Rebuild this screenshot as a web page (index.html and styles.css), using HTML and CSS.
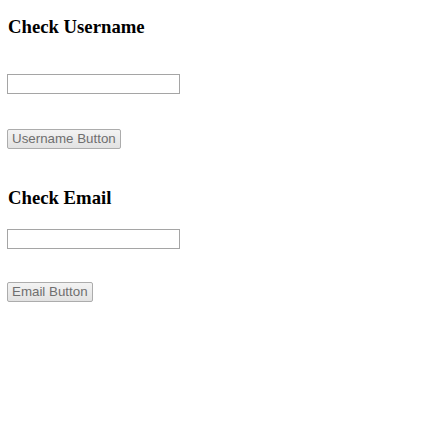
FILE: index.html
```html
<!DOCTYPE html>
<html>
<head>
<meta charset="utf-8">
<link rel="stylesheet" href="styles.css">
</head>
<body>
<main class="page">
  <section class="check check-user">
    <h3 class="title">Check Username</h3>
    <input class="field" type="text">
    <button class="btn" type="button">Username Button</button>
  </section>
  <section class="check check-email">
    <h3 class="title">Check Email</h3>
    <input class="field" type="text">
    <button class="btn" type="button">Email Button</button>
  </section>
</main>
</body>
</html>
```
FILE: styles.css
```css
html, body {
  margin: 0;
  padding: 0;
  background: #ffffff;
}
.page {
  padding: 16px 0 0 7px;
  display: flex;
  flex-direction: column;
}
.check {
  display: flex;
  flex-direction: column;
  align-items: flex-start;
}
.title {
  margin: 0 0 0 1px;
  font-family: "Liberation Serif", "Times New Roman", serif;
  font-size: 18.72px;
  font-weight: bold;
  line-height: 21px;
  color: #000;
}
.check-user .title { margin-bottom: 37px; }
.check-email { margin-top: 38px; }
.check-email .title { margin-bottom: 21px; }
.field {
  box-sizing: border-box;
  width: 173px;
  height: 20px;
  margin: 0;
  padding: 1px 2px;
  border: 1px solid #a5a5a5;
  border-radius: 0;
  background: #fff;
  font-family: "Liberation Sans", Arial, sans-serif;
  font-size: 13.33px;
  outline: none;
}
.btn {
  box-sizing: border-box;
  height: 20px;
  margin: 35px 0 0 0;
  padding: 0 4px;
  border: 1px solid #acacac;
  border-radius: 2px;
  background: linear-gradient(#f3f3f3, #e2e2e2);
  color: #6f6f6f;
  font-family: "Liberation Sans", Arial, sans-serif;
  font-size: 13.33px;
  line-height: 16px;
}
.check-email .btn { margin-top: 33px; }
```
